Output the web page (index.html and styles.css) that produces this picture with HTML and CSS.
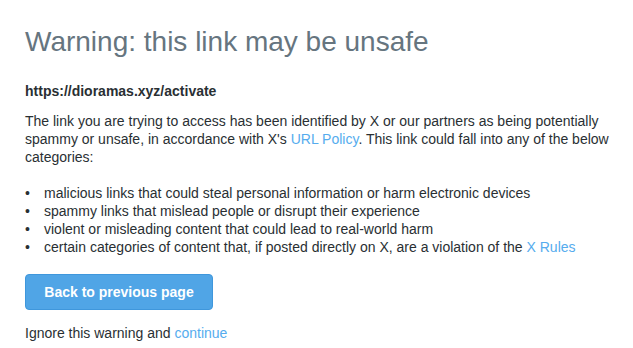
FILE: index.html
```html
<!DOCTYPE html>
<html>
<head>
<meta charset="utf-8">
<link rel="stylesheet" href="styles.css">
</head>
<body>
<div class="page">
  <h1 class="title">Warning: this link may be unsafe</h1>
  <p class="url">https://dioramas.xyz/activate</p>
  <p class="text">The link you are trying to access has been identified by X or our partners as being potentially spammy or unsafe, in accordance with X's <a href="#" class="link">URL Policy</a>. This link could fall into any of the below categories:</p>
  <ul class="list">
    <li>malicious links that could steal personal information or harm electronic devices</li>
    <li>spammy links that mislead people or disrupt their experience</li>
    <li>violent or misleading content that could lead to real-world harm</li>
    <li>certain categories of content that, if posted directly on X, are a violation of the <a href="#" class="link">X Rules</a></li>
  </ul>
  <button class="btn">Back to previous page</button>
  <p class="text ignore">Ignore this warning and <a href="#" class="link">continue</a></p>
</div>
</body>
</html>
```
FILE: styles.css
```css
html, body {
  margin: 0;
  padding: 0;
  background: #fff;
}
body {
  font-family: "Liberation Sans", Arial, sans-serif;
  font-size: 14px;
  line-height: 18px;
  color: #292f33;
}
.page {
  padding: 24px 14px 0 25px;
}
.title {
  font-size: 28px;
  font-weight: normal;
  line-height: 36px;
  color: #66757f;
  margin: 0 0 22px 0;
}
.url {
  font-weight: bold;
  margin: 0 0 12px 0;
}
.text {
  margin: 0;
}
.link {
  color: #55acee;
  text-decoration: none;
}
.list {
  list-style: none;
  margin: 18px 0 18px 0;
  padding-left: 0;
}
.list li::before {
  content: "\2022";
  display: inline-block;
  width: 19px;
}
.btn {
  display: block;
  font-family: "Liberation Sans", Arial, sans-serif;
  font-size: 14px;
  font-weight: bold;
  color: #fff;
  background: #50a5e6;
  border: 1px solid #3f97dc;
  border-radius: 4px;
  width: 188px;
  height: 36px;
  padding: 0;
  margin: 0 0 14px 0;
}
.ignore {
  margin: 0;
}
```
